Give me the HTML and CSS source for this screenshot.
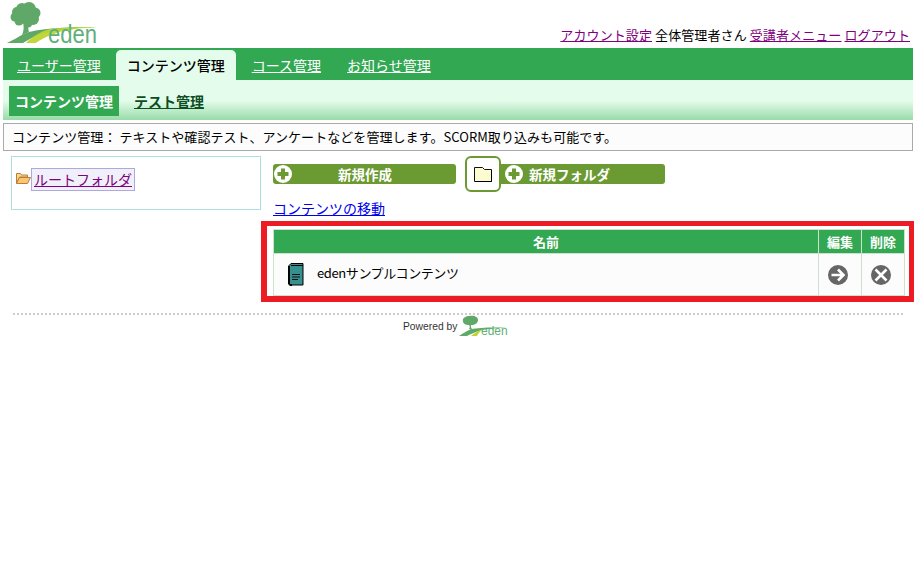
FILE: index.html
```html
<!DOCTYPE html>
<html lang="ja">
<head>
<meta charset="utf-8">
<title>コンテンツ管理</title>
<link rel="stylesheet" href="styles.css">
</head>
<body>
<header class="top">
  <svg class="logo" width="100" height="48" viewBox="0 0 100 48">
    <g fill="#5fa868">
      <circle cx="14" cy="12" r="5"/><circle cx="12" cy="17" r="4.500"/><circle cx="19" cy="9" r="6"/><circle cx="26" cy="9" r="7"/><circle cx="32" cy="13" r="5.500"/><circle cx="30" cy="19" r="6"/><circle cx="22" cy="16" r="8"/><circle cx="16" cy="21" r="4.500"/><circle cx="25" cy="23" r="4.500"/>
      <path d="M20 22h6c-1 4-1 7 0 10l-7 3c2-4 2-9 1-13z"/>
      <path d="M4 43c7-3 12-7 17-9 8-4 30-7 73-7-27 1-46 4-56 7-8 3-13 6-18 9z"/>
    </g>
    <path fill="#bcd52f" d="M23 43c6-6 13-11 24-14 9-1 28-2 47-2-18 1-34 3-43 7-8 3-14 6-18 9h-10z" opacity=".95"/>
    <path fill="#fff" d="M33 43c5-3 11-7 18-9-4 3-7 6-9 9z"/>
    <text class="logo-word" x="45" y="43" textLength="49" lengthAdjust="spacingAndGlyphs">eden</text>
  </svg>
  <div class="account">
    <a class="visited" href="#a">アカウント設定</a> 全体管理者さん <a class="visited" href="#b">受講者メニュー</a> <a class="visited" href="#c">ログアウト</a>
  </div>
</header>
<nav class="tabs">
  <a class="tab" href="#u">ユーザー管理</a>
  <a class="tab active" href="#k">コンテンツ管理</a>
  <a class="tab" href="#c">コース管理</a>
  <a class="tab" href="#o">お知らせ管理</a>
</nav>
<nav class="subnav">
  <a class="sub active" href="#k">コンテンツ管理</a>
  <a class="sub" href="#t">テスト管理</a>
</nav>
<p class="desc">コンテンツ管理： テキストや確認テスト、アンケートなどを管理します。SCORM取り込みも可能です。</p>
<main class="content">
  <aside class="tree">
    <svg class="tree-icon" width="15" height="13" viewBox="0 0 15 13">
      <path fill="#fbd68a" stroke="#b5813a" d="M.5 11.500v-10h4l1 1.500h6v2h-8z"/>
      <path fill="#fdc56f" stroke="#b5813a" d="M.5 11.500l3-6h11l-3 6z"/>
    </svg>
    <a class="tree-link" href="#r">ルートフォルダ</a>
  </aside>
  <section class="work">
    <div class="actions">
      <a class="btn btn-new" href="#n">
        <svg class="plus" width="18" height="18" viewBox="0 0 18 18"><circle cx="9" cy="9" r="9" fill="#fff"/><path fill="#6b9a33" d="M7 3.500h4V7h3.500v4H11v3.500H7V11H3.500V7H7z"/></svg>
        <span class="btn-label">新規作成</span>
      </a>
      <div class="btn-group">
        <span class="folder-box">
          <svg width="18" height="15" viewBox="0 0 18 15"><path fill="#fdfbd0" stroke="#111" d="M.5 14.500V.5h8l2 2h7v12z"/><path fill="none" stroke="#000" d="M17.500 3v11.500H1"/></svg>
        </span>
        <a class="btn btn-folder" href="#f">
          <svg class="plus" width="18" height="18" viewBox="0 0 18 18"><circle cx="9" cy="9" r="9" fill="#fff"/><path fill="#6b9a33" d="M7 3.500h4V7h3.500v4H11v3.500H7V11H3.500V7H7z"/></svg>
          <span>新規フォルダ</span>
        </a>
      </div>
    </div>
    <a class="move" href="#m">コンテンツの移動</a>
    <div class="highlight">
      <table class="list">
        <thead>
          <tr><th>名前</th><th class="col-op">編集</th><th class="col-op">削除</th></tr>
        </thead>
        <tbody>
          <tr>
            <td>
              <div class="item">
                <svg width="16" height="23" viewBox="0 0 16 23">
                  <path fill="#35908f" stroke="#000" d="M1 2.500 3 .5h12v21.500H2.500L1 20.500z"/>
                  <path fill="#000" d="M0 3h2v18h2v2H2l-2-2z"/>
                  <path fill="none" stroke="#000" d="M3 2.500h12"/>
                  <path stroke="#111" d="M4 11.500h8M4 14h8M4 16.500h6"/>
                </svg>
                <span class="item-name">edenサンプルコンテンツ</span>
              </div>
            </td>
            <td class="op">
              <svg width="20" height="20" viewBox="0 0 20 20"><circle cx="10" cy="10" r="10" fill="#666"/><path fill="none" stroke="#fff" stroke-width="2.600" d="M3.500 10h11M10 4.500l5.500 5.500-5.500 5.500"/></svg>
            </td>
            <td class="op">
              <svg width="20" height="20" viewBox="0 0 20 20"><circle cx="10" cy="10" r="10" fill="#666"/><path fill="none" stroke="#fff" stroke-width="2.600" d="M4.500 4.500l11 11M15.500 4.500l-11 11"/></svg>
            </td>
          </tr>
        </tbody>
      </table>
    </div>
  </section>
</main>
<footer class="foot">
  <span class="powered">Powered by</span>
  <svg class="foot-logo" width="50" height="22" viewBox="0 0 50 22">
    <path fill="#5fa868" d="M11 14c1-2 1-3 0-4-3 0-6-1-6-4-1-3 3-5 7-5 4-1 8 1 8 4 0 3-3 5-7 5 0 2 0 3 1 4z"/>
    <path fill="#5fa868" d="M1 21c4-3 8-5 12-7 8-1 22-2 36-1-13 0-24 1-31 4-3 1-7 3-9 4z"/>
    <path fill="#bcd52f" d="M13 21c3-3 7-5 12-7-3 2-5 5-6 7z"/>
    <text class="foot-word" x="23" y="20">eden</text>
  </svg>
</footer>
</body>
</html>
```
FILE: styles.css
```css
* { box-sizing: border-box; }
html, body { margin: 0; padding: 0; }
body {
  padding: 0 3px;
  background: #fff;
  color: #000;
  font-family: "Noto Sans CJK JP", "Noto Sans", sans-serif;
  font-size: 14px;
  line-height: 20px;
}
a { color: #00e; }
a.visited { color: #800080; }

.top {
  height: 48px;
  display: flex;
  justify-content: space-between;
  align-items: flex-end;
}
.logo { display: block; }
.logo-word { font-family: "Liberation Sans", sans-serif; font-size: 25px; fill: #5fb078; }
.account { padding: 0 3px 3px 0; font-size: 13px; letter-spacing: .1px; }

.tabs {
  height: 32px;
  background: #32a852;
  display: flex;
  align-items: flex-end;
  padding-left: 14px;
}
.tab {
  color: #fff;
  height: 30px;
  line-height: 30px;
  margin-right: 26px;
}
.tab.active {
  background: #e4fcec;
  color: #000;
  text-decoration: none;
  font-weight: 500;
  width: 120px;
  text-align: center;
  border-radius: 5px 5px 0 0;
  margin: 0 16px 0 -11px;
}
.subnav {
  height: 40px;
  padding: 6px 0 4px 6px;
  display: flex;
  background: linear-gradient(#e4fcec 0, #e4fcec 52%, #98dba8 100%);
}
.sub {
  height: 30px;
  line-height: 30px;
  color: #0d4d22;
  font-weight: 700;
  margin-left: 15px;
}
.sub.active {
  width: 110px;
  margin-left: 0;
  text-align: center;
  color: #fff;
  background: #32a852;
  text-decoration: none;
}
.desc {
  margin: 3px 0 0;
  height: 28px;
  border: 1px solid #aaa;
  background: #fcfcfc;
  padding: 3px 8px;
  font-size: 13px;
  line-height: 20px;
  letter-spacing: .06px;
}

.content {
  display: flex;
  align-items: flex-start;
}
.tree {
  flex: none;
  width: 250px;
  height: 54px;
  margin: 5px 0 0 8px;
  border: 1px solid #aee0e0;
  padding: 11px 0 0 4px;
  display: flex;
  align-items: flex-start;
}
.tree-icon { margin-top: 4px; }
.tree-link {
  color: #800080;
  height: 23px;
  padding: 0 2px;
  background: #f0f0fa;
  border: 1px solid #b0a8dc;
  line-height: 21px;
}
.work { flex: none; width: 653px; margin-top: 5px; }
.actions {
  display: flex;
  align-items: center;
  margin-left: 12px;
  height: 36px;
}
.btn {
  height: 20px;
  background: #6b9a33;
  border-radius: 3px;
  color: #fff;
  font-weight: 700;
  font-size: 13.500px;
  text-decoration: none;
  display: flex;
  align-items: center;
}
.btn-new { width: 183px; padding-left: 1px; }
.plus { flex: none; }
.btn-label { flex: 1; text-align: center; padding-right: 18px; }
.btn-group { display: flex; align-items: center; margin-left: 9px; }
.folder-box {
  width: 36px;
  height: 36px;
  border: 2px solid #6b9a33;
  border-radius: 6px;
  background: #fff;
  display: flex;
  align-items: center;
  justify-content: center;
}
.btn-folder { width: 164px; padding-left: 4px; gap: 6px; border-radius: 0 3px 3px 0; }
.move { display: block; margin: 6px 0 0 12px; height: 21px; }
.highlight {
  margin-top: 2px;
  width: 653px;
  height: 81px;
  border-style: solid;
  border-color: #ed1c24;
  border-width: 5px 5px 6px 6px;
  padding: 3px 4px 0 6px;
}
.list {
  width: 632px;
  border-collapse: collapse;
  background: #fcfcfc;
  table-layout: fixed;
}
.list th, .list td { border: 1px solid #cfe0d0; padding: 0; }
.list th {
  height: 24px;
  background: #32a852;
  color: #fff;
  font-size: 13px;
  line-height: 20px;
}
.list .col-op { width: 43px; }
.list td { height: 42px; }
.item { display: flex; align-items: center; gap: 13px; padding-left: 14px; font-size: 13px; }
.item-name { letter-spacing: -.4px; margin-top: -4px; }
.list td.op { padding-right: 5px; vertical-align: middle; }
.op svg { display: block; margin: 0 auto; }

.foot {
  margin: 11px 10px 0;
  border-top: 2px dotted #ccc;
  display: flex;
  justify-content: center;
  align-items: flex-start;
  padding-right: 5px;
}
.powered { font-family: "Liberation Sans", sans-serif; font-size: 10.300px; line-height: 24px; color: #333; width: 55px; white-space: nowrap; }
.foot-logo { overflow: visible; }
.foot-word { font-family: "Liberation Sans", sans-serif; font-size: 12px; fill: #5fb078; }
```
